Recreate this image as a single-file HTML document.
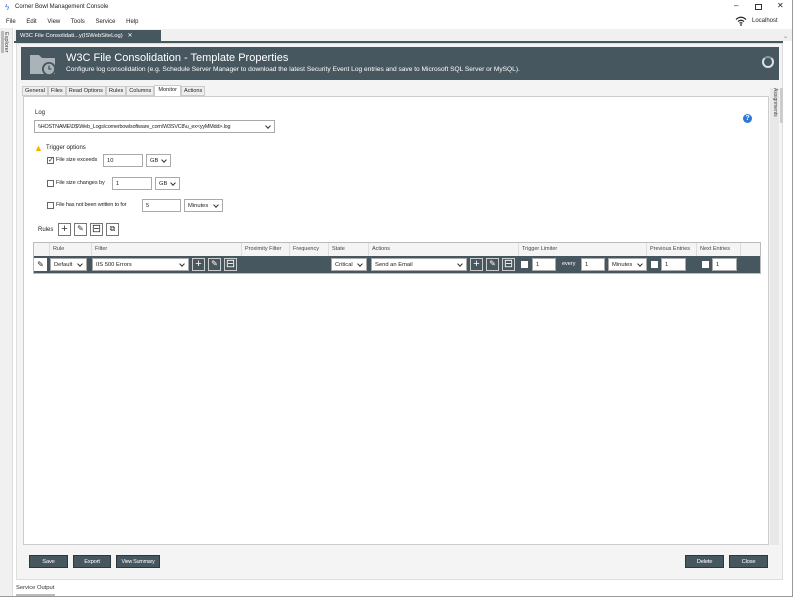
<!DOCTYPE html>
<html><head><style>
*{box-sizing:border-box;margin:0;padding:0}
body{width:793px;height:597px;position:relative;background:#fff;font-family:"Liberation Sans",sans-serif;font-size:6px;color:#222;overflow:hidden;white-space:nowrap}
.a{position:absolute}
.inp{position:absolute;background:#fff;border:1px solid #aaa;font-size:5.8px;padding:2px 3px;line-height:8px;height:13px;overflow:hidden}
.sel::after{content:"";position:absolute;right:4px;top:3px;width:3px;height:3px;border-right:1px solid #333;border-bottom:1px solid #333;transform:rotate(45deg)}
.cb{position:absolute;width:7px;height:7px;border:1px solid #666;background:#fff}
.wcb{position:absolute;width:7px;height:7px;background:#fff}
.btn{position:absolute;background:#47575f;color:#fff;font-size:5.8px;text-align:center;line-height:12px;height:13px;border:1px solid #2c383e;letter-spacing:-0.2px}
.ib{position:absolute;width:13px;height:13px;border:1px solid #777;background:#fff;font-size:11px;line-height:10px;text-align:center;color:#333}
.dib{position:absolute;width:13px;height:13px;border:1px solid #ccc;background:#47575f;color:#fff;font-size:11px;line-height:10px;text-align:center}
.th{position:absolute;top:0;height:13px;line-height:13px;border-right:1px solid #ddd;padding-left:3px;font-size:5.5px;color:#444;overflow:hidden}
</style></head><body>
<div class="a" style="left:5px;top:3px;color:#3a7bd5;font-size:8px">ϟ</div>
<div class="a" style="left:15px;top:4px;font-size:6px">Corner Bowl Management Console</div>
<div class="a" style="left:734px;top:1px;font-size:8px">–</div>
<div class="a" style="left:755px;top:4px;width:7px;height:6px;border:1px solid #333"></div>
<div class="a" style="left:777px;top:1px;font-size:8px">✕</div>
<div class="a" style="top:19px;left:6px;font-size:6px;word-spacing:9px">File Edit View Tools Service Help</div>
<svg class="a" style="left:735px;top:16px" width="12" height="10" viewBox="0 0 12 10"><path d="M1 3.5Q6 -1 11 3.5M3 5.5Q6 3 9 5.5M4.6 7.3Q6 6.3 7.4 7.3" stroke="#222" fill="none" stroke-width="1.2"/><circle cx="6" cy="9" r="0.9" fill="#222"/></svg>
<div class="a" style="left:752px;top:18px;font-size:6px">Localhost</div>
<div class="a" style="left:0;top:28px;width:13px;height:569px;background:#f0f0f0;border-right:1px solid #ddd"></div>
<div class="a" style="left:3px;top:32px;font-size:5.5px;writing-mode:vertical-rl;color:#444">Explorer</div>
<div class="a" style="left:1px;top:31px;width:3px;height:22px;background:#bbb"></div>
<div class="a" style="left:14px;top:29px;width:779px;height:12px;background:#f0f0f0"></div>
<div class="a" style="left:16px;top:30px;width:145px;height:12px;background:#47575f;color:#fff;font-size:5.8px;line-height:12px;padding-left:4px">W3C File Consolidati...y(ISWebSiteLog) &nbsp;&nbsp;✕</div>
<div class="a" style="left:14px;top:41px;width:769px;height:2px;background:#47575f"></div>
<div class="a" style="left:783px;top:33px;font-size:6px;color:#777">⌄</div>
<div class="a" style="left:16px;top:43px;width:767px;height:537px;background:#f4f4f4;border:1px solid #ddd"></div>
<div class="a" style="left:21px;top:47px;width:758px;height:33px;background:#47575f"></div>
<svg class="a" style="left:28px;top:51px" width="30" height="26" viewBox="0 0 30 26"><path d="M2 4h9l3 3h13v16H2z" fill="#a9b3b8"/><circle cx="21" cy="18" r="7" fill="#47575f"/><circle cx="21" cy="18" r="5.2" fill="#a9b3b8"/><path d="M21 14.5V18h2.5" stroke="#47575f" stroke-width="1.3" fill="none"/></svg>
<div class="a" style="left:66px;top:52px;color:#fff;font-size:11px">W3C File Consolidation - Template Properties</div>
<div class="a" style="left:66px;top:66px;color:#fff;font-size:6.6px">Configure log consolidation (e.g. Schedule Server Manager to download the latest Security Event Log entries and save to Microsoft SQL Server or MySQL).</div>
<div class="a" style="left:762px;top:56px;width:12px;height:12px;border-radius:50%;border:2px solid #dfe3e5;border-top-color:#8a979d"></div>
<div class="a" style="left:22px;top:86px;font-size:5.6px;display:flex">
<span style="border:1px solid #ccc;background:#eee;padding:1px 2px">General</span><span style="border:1px solid #ccc;background:#eee;padding:1px 2px">Files</span><span style="border:1px solid #ccc;background:#eee;padding:1px 2px">Read Options</span><span style="border:1px solid #ccc;background:#eee;padding:1px 2px">Rules</span><span style="border:1px solid #ccc;background:#eee;padding:1px 2px">Columns</span><span style="border:1px solid #ccc;border-bottom:none;background:#fff;padding:1px 3px;margin-top:-1px">Monitor</span><span style="border:1px solid #ccc;background:#eee;padding:1px 2px">Actions</span></div>
<div class="a" style="left:23px;top:96px;width:746px;height:449px;background:#fff;border:1px solid #ccc"></div>
<div class="a" style="left:770px;top:88px;width:9px;height:457px;background:#e8e8e8"></div>
<div class="a" style="left:780px;top:88px;width:3px;height:35px;background:#ccc"></div>
<div class="a" style="left:772px;top:88px;font-size:5px;writing-mode:vertical-rl;color:#444">Assignments</div>
<div class="a" style="left:743px;top:114px;width:9px;height:9px;border-radius:50%;background:#2a7bd6;color:#fff;font-size:7px;font-weight:bold;text-align:center;line-height:9px">?</div>
<div class="a" style="left:35px;top:110px;font-size:6px">Log</div>
<div class="inp sel" style="left:34px;top:120px;width:241px;font-size:5.4px;letter-spacing:-0.15px">\\HOSTNAME\D$\Web_Logs\cornerbowlsoftware_com\W3SVC8\u_ex&lt;yyMMdd&gt;.log</div>
<div class="a" style="left:34px;top:143px;color:#f0b400;font-size:9px">▲</div>
<div class="a" style="left:46px;top:145px;font-size:6px">Trigger options</div>
<div class="cb" style="left:47px;top:157px;font-size:7px;line-height:5px">✓</div>
<div class="a" style="left:56px;top:157px;font-size:5.6px;letter-spacing:-0.1px">File size exceeds</div>
<div class="inp" style="left:103px;top:154px;width:40px">10</div>
<div class="inp sel" style="left:146px;top:154px;width:25px">GB</div>
<div class="cb" style="left:47px;top:180px"></div>
<div class="a" style="left:56px;top:180px;font-size:5.6px;letter-spacing:-0.1px">File size changes by</div>
<div class="inp" style="left:112px;top:177px;width:40px">1</div>
<div class="inp sel" style="left:155px;top:177px;width:25px">GB</div>
<div class="cb" style="left:47px;top:202px"></div>
<div class="a" style="left:56px;top:202px;font-size:5.6px;letter-spacing:-0.15px">File has not been written to for</div>
<div class="inp" style="left:142px;top:199px;width:39px">5</div>
<div class="inp sel" style="left:184px;top:199px;width:39px">Minutes</div>
<div class="a" style="left:38px;top:227px;font-size:6px">Rules</div>
<div class="ib" style="left:58px;top:223px">+</div>
<div class="ib" style="left:74px;top:223px;font-size:8px">✎</div>
<div class="ib" style="left:90px;top:223px">⊟</div>
<div class="ib" style="left:106px;top:223px;font-size:8px">⧉</div>
<div class="a" style="left:33px;top:242px;width:728px;height:32px;border:1px solid #bbb;background:#f4f4f4">
<div class="th" style="left:0;width:16px"></div>
<div class="th" style="left:16px;width:42px">Rule</div>
<div class="th" style="left:58px;width:150px">Filter</div>
<div class="th" style="left:208px;width:48px">Proximity Filter</div>
<div class="th" style="left:256px;width:39px">Frequency</div>
<div class="th" style="left:295px;width:40px">State</div>
<div class="th" style="left:335px;width:150px">Actions</div>
<div class="th" style="left:485px;width:128px">Trigger Limiter</div>
<div class="th" style="left:613px;width:50px">Previous Entries</div>
<div class="th" style="left:663px;width:44px">Next Entries</div>
<div class="a" style="left:0;top:13px;width:726px;height:17px;background:#47575f"></div>
</div>
<div class="a" style="left:34px;top:258px;width:13px;height:13px;background:#fff;font-size:8px;text-align:center;line-height:13px">✎</div>
<div class="inp sel" style="left:50px;top:258px;width:37px">Default</div>
<div class="inp sel" style="left:92px;top:258px;width:97px">IIS 500 Errors</div>
<div class="dib" style="left:192px;top:258px">+</div>
<div class="dib" style="left:208px;top:258px;font-size:8px">✎</div>
<div class="dib" style="left:224px;top:258px">⊟</div>
<div class="inp sel" style="left:331px;top:258px;width:36px">Critical</div>
<div class="inp sel" style="left:371px;top:258px;width:96px">Send an Email</div>
<div class="dib" style="left:470px;top:258px">+</div>
<div class="dib" style="left:486px;top:258px;font-size:8px">✎</div>
<div class="dib" style="left:502px;top:258px">⊟</div>
<div class="wcb" style="left:521px;top:261px"></div>
<div class="inp" style="left:532px;top:258px;width:24px">1</div>
<div class="a" style="left:562px;top:261px;color:#fff;font-size:5.5px">every</div>
<div class="inp" style="left:581px;top:258px;width:24px">1</div>
<div class="inp sel" style="left:608px;top:258px;width:39px">Minutes</div>
<div class="wcb" style="left:651px;top:261px"></div>
<div class="inp" style="left:661px;top:258px;width:25px">1</div>
<div class="wcb" style="left:702px;top:261px"></div>
<div class="inp" style="left:712px;top:258px;width:25px">1</div>
<div class="btn" style="left:29px;top:555px;width:39px">Save</div>
<div class="btn" style="left:73px;top:555px;width:38px">Export</div>
<div class="btn" style="left:116px;top:555px;width:44px;font-size:5.3px">View Summary</div>
<div class="btn" style="left:685px;top:555px;width:39px">Delete</div>
<div class="btn" style="left:729px;top:555px;width:39px">Close</div>
<div class="a" style="left:16px;top:585px;font-size:5.8px;color:#333">Service Output</div>
<div class="a" style="left:16px;top:594px;width:39px;height:3px;background:#bbb"></div>
<div class="a" style="left:0;top:596px;width:793px;height:1px;background:#999"></div>
<div class="a" style="left:792px;top:0;width:1px;height:597px;background:#999"></div>
</body></html>
